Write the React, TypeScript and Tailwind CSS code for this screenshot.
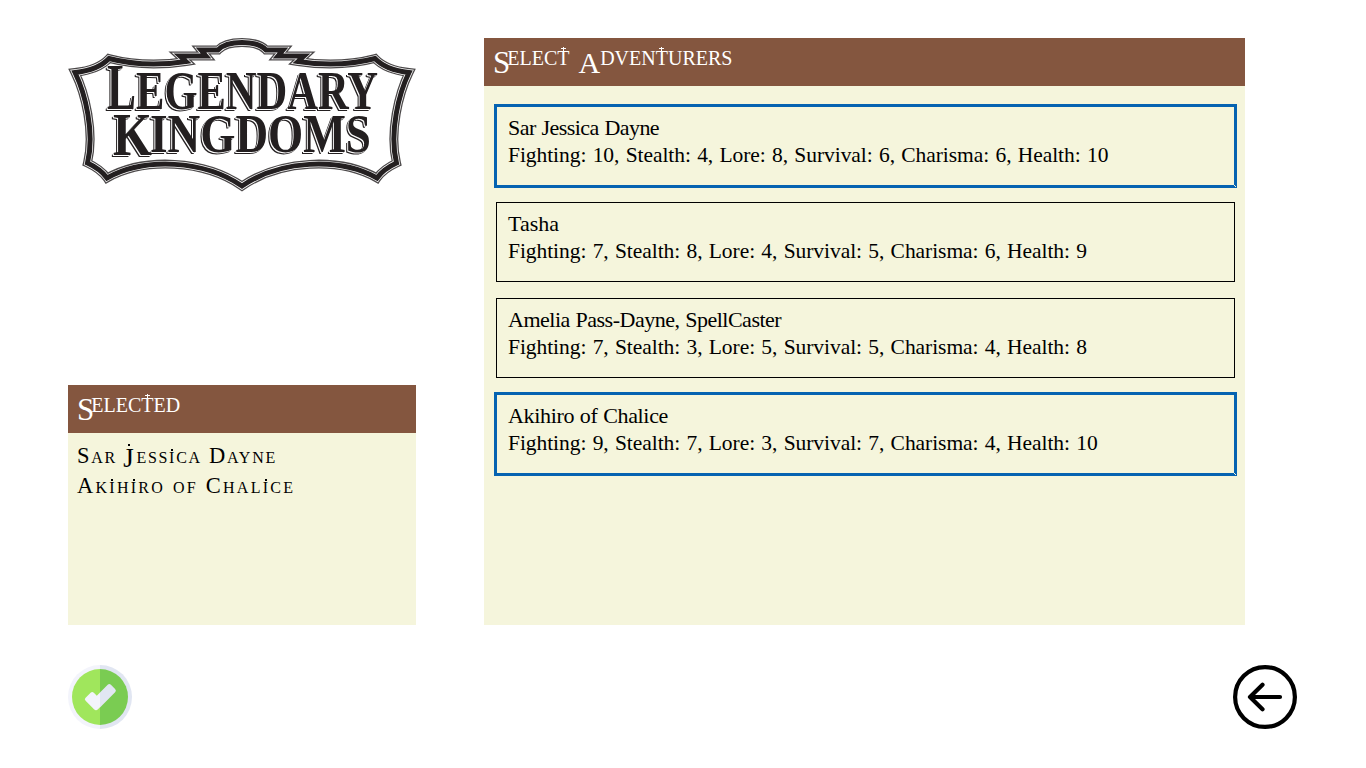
const adventurers = [
  { name: 'Sar Jessica Dayne', stats: [10, 4, 8, 6, 6, 10], selected: true, nameClass: 'tracking-[-0.55px] [word-spacing:0.8px]' },
  { name: 'Tasha', stats: [7, 8, 4, 5, 6, 9], selected: false, nameClass: 'tracking-[0px]' },
  { name: 'Amelia Pass-Dayne, SpellCaster', stats: [7, 3, 5, 5, 4, 8], selected: false, nameClass: 'tracking-[-0.5px] [word-spacing:0.8px]' },
  { name: 'Akihiro of Chalice', stats: [9, 7, 3, 7, 4, 10], selected: true, nameClass: 'tracking-[-0.33px] [word-spacing:0.5px]' },
];

const labels = ['Fighting', 'Stealth', 'Lore', 'Survival', 'Charisma', 'Health'];

const frame =
  'M242 42.5 C232 42.5 223 44.5 218 50 L201 50 L206 56 L180 56 L186 61.5 C160 65.5 132 64.5 109 58.5 C101 67 88 71 75 72.5 C85 93 95 132 87.5 163 C94 166 102 171 107 178 C145 157 204 160 242 186 C280 160 339 157 377 178 C382 171 390 166 396.5 163 C389 132 399 93 409 72.5 C396 71 383 67 375 58.5 C352 64.5 324 65.5 298 61.5 L304 56 L278 56 L283 50 L266 50 C261 44.5 252 42.5 242 42.5 Z';

function Logo() {
  return (
    <svg className="block h-[154px] w-[348px]" viewBox="68 38 348 154" overflow="visible" role="img" aria-label="Legendary Kingdoms">
      <g fill="none" strokeLinejoin="miter">
        <path d={frame} stroke="#4c494a" strokeWidth="9" />
        <path d={frame} stroke="#fff" strokeWidth="6.4" />
        <path d={frame} stroke="#231f20" strokeWidth="5" />
      </g>
      <g
        fontFamily="'Liberation Serif', serif"
        fontWeight="700"
        fill="#231f20"
        className="[filter:drop-shadow(-1px_1px_0_#fff)_drop-shadow(-1px_1px_0_#231f20)]"
      >
        <text x="107" y="109" fontSize="65" textLength="29" lengthAdjust="spacingAndGlyphs">L</text>
        <text x="136" y="109" fontSize="54" textLength="242" lengthAdjust="spacingAndGlyphs">EGENDARY</text>
        <text x="113" y="155" fontSize="62" textLength="39" lengthAdjust="spacingAndGlyphs">K</text>
        <text x="150" y="152" fontSize="55" textLength="221" lengthAdjust="spacingAndGlyphs">INGDOMS</text>
      </g>
    </svg>
  );
}

function Rest({ children }: { children: string }) {
  return (
    <span className="uppercase">
      {children.split('').map((c, i) =>
        c === 't' ? (
          <span key={i} className="relative before:absolute before:left-[5.5px] before:top-0 before:h-[5px] before:w-px before:bg-white after:absolute after:left-[3.5px] after:top-[1px] after:h-px after:w-[5px] after:bg-white">{c}</span>
        ) : (
          c
        ),
      )}
    </span>
  );
}

function Name({ children, className }: { children: string; className: string }) {
  return (
    <p className={className}>
      {children.split('').map((c, i) =>
        c === 'i' ? (
          <span key={i} className="relative after:absolute after:left-[2px] after:top-[6px] after:size-[2px] after:bg-black">{c}</span>
        ) : c === 'J' ? (
          <span key={i} className="relative -left-px top-[4px] text-[27px] leading-[20px] after:absolute after:left-[5px] after:top-px after:size-[2px] after:bg-black">{c}</span>
        ) : (
          c
        ),
      )}
    </p>
  );
}

export default function App() {
  return (
    <main className="flex h-[768px] w-[1366px] flex-col overflow-hidden bg-white pl-[68px] pr-[69px] pt-[38px] font-['Liberation_Serif',serif] text-black">
      <div className="flex h-[587px] gap-[68px]">
        <div className="flex w-[348px] flex-col justify-between">
          <Logo />
          <section className="h-[240px] bg-[#f5f5dc]">
            <h2 className="h-12 whitespace-nowrap bg-[#84563f] pl-[9px] text-[20px] leading-[40px] text-white">
              <span className="relative top-[8px] mr-[-3px] text-[31px] leading-[20px]">S</span>
              <Rest>elected</Rest>
            </h2>
            <div className="whitespace-nowrap pl-[9px] pt-[8px] text-[22.5px] leading-[30px] [font-variant-caps:small-caps]">
              <Name className="tracking-[1.7px]">Sar Jessica Dayne</Name>
              <Name className="tracking-[2.25px]">Akihiro of Chalice</Name>
            </div>
          </section>
        </div>
        <section className="w-[761px] bg-[#f5f5dc]">
          <h1 className="h-12 whitespace-nowrap bg-[#84563f] pl-[9px] text-[20px] leading-[40px] text-white">
            <span className="relative top-[8px] mr-[-3px] text-[31px] leading-[20px]">S</span>
            <Rest>elect</Rest>
            <span className="[word-spacing:4px]"> </span>
            <span className="relative top-[8px] text-[30px] leading-[20px]">A</span>
            <Rest>dventurers</Rest>
          </h1>
          <div className="flex flex-col gap-3 pl-[10px] pt-[18px]">
            {adventurers.map((a) => (
              <button
                key={a.name}
                className={`relative block h-[84px] w-[743px] whitespace-nowrap text-left text-[22px] leading-[27px] ${a.selected ? 'border-[3px] border-[#0563b1] pl-[11px]' : 'p-[2px]'}`}
              >
                <div className={a.selected ? 'h-full pt-[7px]' : 'h-full border border-black pl-[11px] pt-[7px]'}>
                  <p className={a.nameClass}>{a.name}</p>
                  <p className="pt-px tracking-[-0.06px] text-[21.5px] [word-spacing:1px]">{labels.map((label, i) => `${label}: ${a.stats[i]}`).join(', ')}</p>
                </div>
                {a.selected && <span className="absolute -bottom-px -right-px size-px bg-[#f5f5dc] shadow-[1px_1px_0_#f5f5dc]" />}
              </button>
            ))}
          </div>
        </section>
      </div>
      <div className="mt-10 flex justify-between">
        <button aria-label="Confirm">
          <svg className="block size-16" viewBox="0 0 64 64">
            <path d="M32 0a32 32 0 0 0 0 64z" fill="#f3f4fb" />
            <path d="M32 0a32 32 0 0 1 0 64z" fill="#e1e6f2" />
            <path d="M32 4a28 28 0 0 0 0 56z" fill="#a0e65c" />
            <path d="M32 4a28 28 0 0 1 0 56z" fill="#7acc52" />
            <path d="M32 27.5l-3.2 3.2-3-3q-1.6-1.6-3.2 0l-5 5q-1.6 1.5 0 3.1l8.4 8.5q2 2 4 0l2-2z" fill="#f3f4fb" />
            <path d="M32 27.5l7.7-7.7q1.6-1.6 3.2 0l4.2 4.2q1.7 1.7 0 3.3L32 42.4z" fill="#e1e6f2" />
          </svg>
        </button>
        <button aria-label="Back">
          <svg className="block size-16" viewBox="0 0 64 64" fill="none" stroke="#000" strokeWidth="4.2" strokeLinecap="round" strokeLinejoin="round">
            <circle cx="32" cy="32" r="29.9" />
            <path d="M47 32H17M29.5 19.7L17 32l12.5 12.3" />
          </svg>
        </button>
      </div>
    </main>
  );
}
